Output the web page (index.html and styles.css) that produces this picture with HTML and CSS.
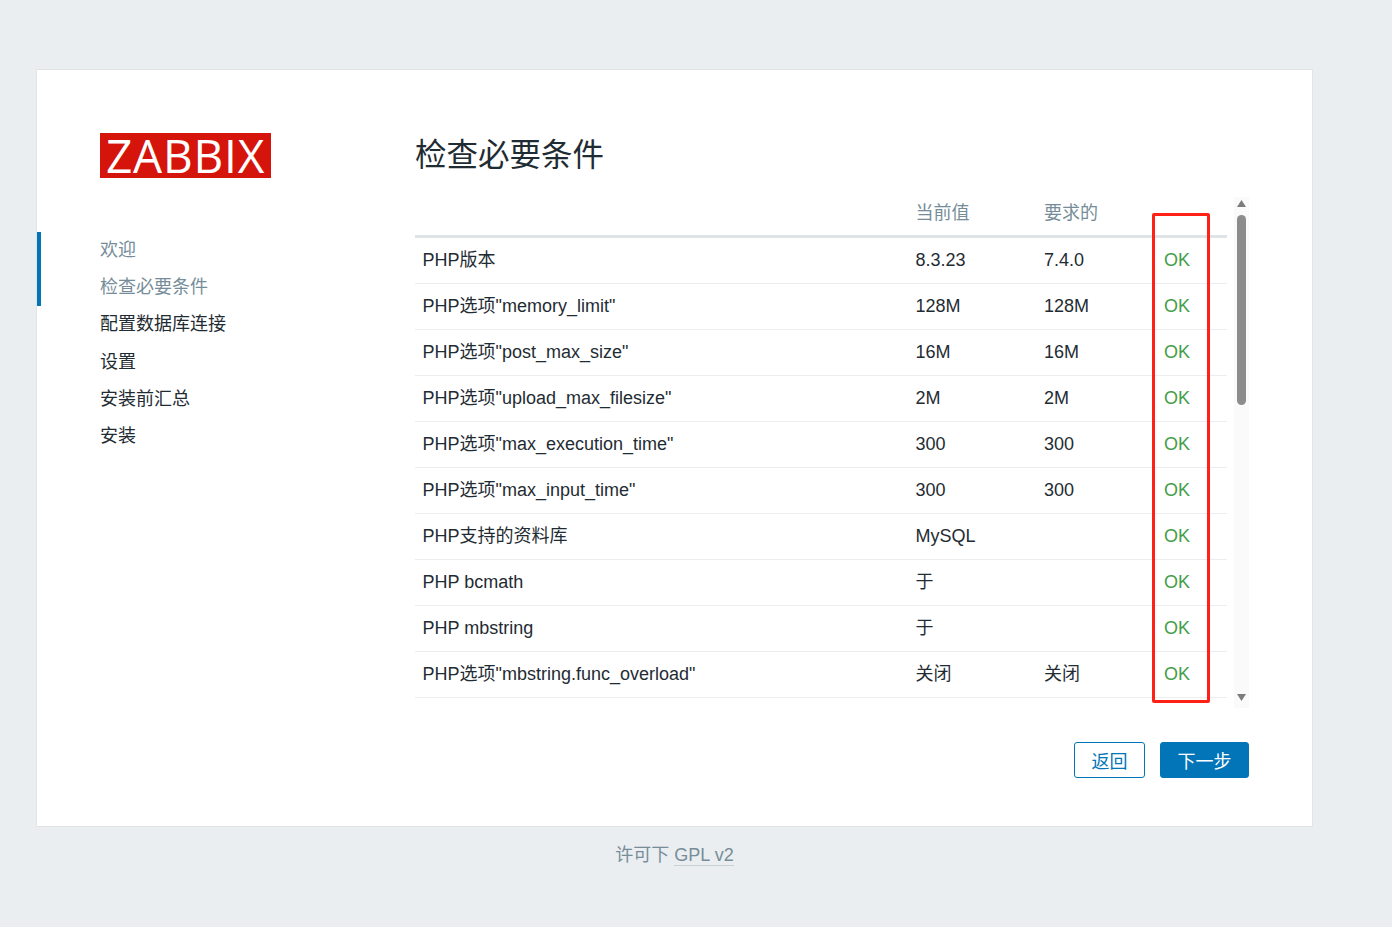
FILE: index.html
```html
<!DOCTYPE html>
<html lang="zh-CN">
<head>
<meta charset="utf-8">
<title>Zabbix</title>
<link rel="stylesheet" href="styles.css">
</head>
<body>
<div class="card">
  <aside class="sidebar">
    <div class="logo"><span class="logo-text">ZABBIX</span></div>
    <ul class="steps">
      <li class="step done">欢迎</li>
      <li class="step done">检查必要条件</li>
      <li class="step">配置数据库连接</li>
      <li class="step">设置</li>
      <li class="step">安装前汇总</li>
      <li class="step">安装</li>
    </ul>
  </aside>
  <main class="main">
    <h1 class="title">检查必要条件</h1>
    <div class="scroll-area">
      <table class="checks">
        <colgroup><col class="c1"><col class="c2"><col class="c3"><col class="c4"></colgroup>
        <thead>
          <tr><th></th><th>当前值</th><th>要求的</th><th></th></tr>
        </thead>
        <tbody>
          <tr><td>PHP版本</td><td>8.3.23</td><td>7.4.0</td><td class="ok">OK</td></tr>
          <tr><td>PHP选项"memory_limit"</td><td>128M</td><td>128M</td><td class="ok">OK</td></tr>
          <tr><td>PHP选项"post_max_size"</td><td>16M</td><td>16M</td><td class="ok">OK</td></tr>
          <tr><td>PHP选项"upload_max_filesize"</td><td>2M</td><td>2M</td><td class="ok">OK</td></tr>
          <tr><td>PHP选项"max_execution_time"</td><td>300</td><td>300</td><td class="ok">OK</td></tr>
          <tr><td>PHP选项"max_input_time"</td><td>300</td><td>300</td><td class="ok">OK</td></tr>
          <tr><td>PHP支持的资料库</td><td>MySQL</td><td></td><td class="ok">OK</td></tr>
          <tr><td>PHP bcmath</td><td>于</td><td></td><td class="ok">OK</td></tr>
          <tr><td>PHP mbstring</td><td>于</td><td></td><td class="ok">OK</td></tr>
          <tr><td>PHP选项"mbstring.func_overload"</td><td>关闭</td><td>关闭</td><td class="ok">OK</td></tr>
        </tbody>
      </table>
      <div class="scrollbar">
        <span class="arrow arrow-up"></span>
        <span class="thumb"></span>
        <span class="arrow arrow-down"></span>
      </div>
    </div>
    <div class="actions">
      <button class="btn btn-alt">返回</button>
      <button class="btn btn-primary">下一步</button>
    </div>
  </main>
</div>
<footer class="footer">许可下 <a class="footer-link">GPL v2</a></footer>
<div class="annotation"></div>
</body>
</html>
```
FILE: styles.css
```css
* { box-sizing: border-box; }
html, body { margin: 0; padding: 0; }
body {
  height: 927px;
  overflow: hidden;
  background: #ebeef0;
  color: #1f2c33;
  font: 18px/27px "Liberation Sans", "Noto Sans CJK SC", sans-serif;
  padding-top: 69px;
}
.card {
  width: 1277px;
  height: 758px;
  margin-left: 36px;
  padding: 63px 63px 47px;
  display: flex;
  background: #fff;
  border: 1px solid #dfe4e7;
}
.sidebar { width: 315px; flex: none; }
.logo {
  width: 171px;
  height: 45px;
  background-color: #d5140c;
  color: #fff;
  text-align: center;
}
.logo-text {
  display: block;
  font-family: "Open Sans", "Liberation Sans", sans-serif;
  font-size: 46px;
  line-height: 45px;
  letter-spacing: 0.8px;
}
.steps {
  list-style: none;
  margin: 54px 0 0 -63px;
  padding: 0;
}
.step {
  height: 37.2px;
  line-height: 37.2px;
  padding-left: 63px;
}
.step.done {
  color: #768d99;
  border-left: 4px solid #0275b8;
  padding-left: 59px;
}
.main { flex: 1; min-width: 0; }
.title {
  margin: 0 0 25px;
  height: 39px;
  font-size: 31.5px;
  line-height: 44px;
  font-weight: 400;
}
.scroll-area {
  height: 511px;
  display: flex;
  justify-content: space-between;
}
.checks {
  width: 812px;
  height: 501px;
  table-layout: fixed;
  border-collapse: separate;
  border-spacing: 0;
}
.c1 { width: 493px; }
.c2 { width: 128.5px; }
.c3 { width: 120px; }
.c4 { width: 70.5px; }
.checks th {
  height: 41px;
  padding: 0 7.5px 5px;
  text-align: left;
  font-weight: 400;
  color: #768d99;
  border-bottom: 3px solid #dfe4e7;
}
.checks td {
  height: 46px;
  padding: 0 7.5px;
  border-bottom: 1px solid #ebeef0;
}
.checks td.ok { color: #429e47; }
.scrollbar {
  width: 15px;
  height: 511px;
  padding-top: 3px;
  background: #fafafa;
  display: flex;
  flex-direction: column;
  align-items: center;
}
.arrow {
  width: 9px;
  height: 7px;
  background: #7c7c7c;
}
.arrow-up { clip-path: polygon(50% 0, 100% 100%, 0 100%); }
.arrow-down { clip-path: polygon(0 0, 100% 0, 50% 100%); margin-top: 289px; }
.thumb {
  width: 9px;
  height: 190px;
  margin-top: 8px;
  border-radius: 5px;
  background: #8c8c8c;
}
.actions {
  margin-top: 34px;
  display: flex;
  justify-content: flex-end;
  gap: 15px;
}
.btn {
  height: 36px;
  padding: 3px 0 0;
  border-radius: 3px;
  font: inherit;
  line-height: 30px;
}
.btn-alt {
  width: 71px;
  background: #fff;
  color: #0275b8;
  border: 1px solid #0275b8;
}
.btn-primary {
  width: 89px;
  background: #0275b8;
  color: #fff;
  border: 1px solid #0275b8;
}
.footer {
  margin-top: 15px;
  margin-left: 36px;
  width: 1277px;
  text-align: center;
  color: #768d99;
}
.footer-link { border-bottom: 1px solid #c9d2d7; }
.annotation {
  position: absolute;
  left: 1152px;
  top: 213px;
  width: 58px;
  height: 490px;
  border: 3px solid #ff2116;
  border-radius: 2px;
}
```
